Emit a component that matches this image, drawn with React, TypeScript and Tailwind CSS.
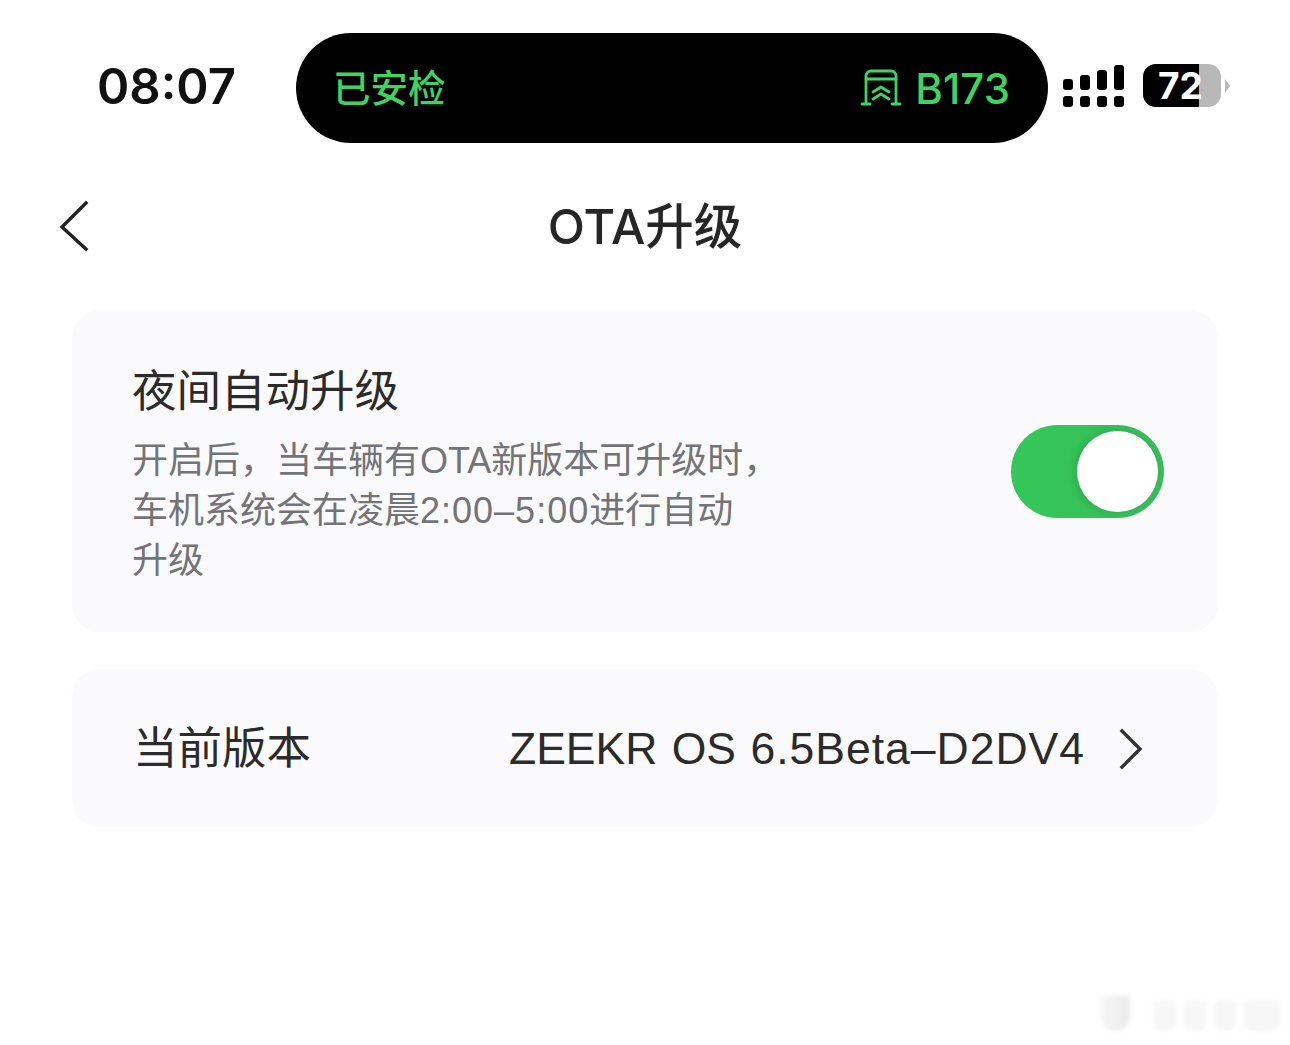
const sans = 'font-["Liberation_Sans","Noto_Sans_CJK_SC",sans-serif]'
const ui = 'font-["Inter","Noto_Sans_CJK_SC",sans-serif]'

function GarageIcon() {
  return (
    <svg width="44" height="44" viewBox="0 0 44 44" fill="none" stroke="#3fd35f" strokeWidth="2.800" strokeLinecap="round" strokeLinejoin="round">
      <path d="M7 38V10a5 5 0 0 1 5-5h20a5 5 0 0 1 5 5v28" />
      <path d="M7 13h30" />
      <path d="M3 38h8M33 38h8" />
      <path d="M14 26l8-5 8 5" />
      <path d="M14 33l8-5 8 5" />
    </svg>
  )
}

function SignalDots() {
  return (
    <div className="flex items-end gap-[7px]">
      <div className="flex flex-col gap-[6px]">
        <div className="w-[10px] h-[11px] rounded-[3px] bg-black" />
        <div className="w-[10px] h-[11px] rounded-[3px] bg-black" />
      </div>
      <div className="flex flex-col gap-[6px]">
        <div className="w-[10px] h-[15px] rounded-[3px] bg-black" />
        <div className="w-[10px] h-[11px] rounded-[3px] bg-black" />
      </div>
      <div className="flex flex-col gap-[6px]">
        <div className="w-[10px] h-[20px] rounded-[3px] bg-black" />
        <div className="w-[10px] h-[11px] rounded-[3px] bg-black" />
      </div>
      <div className="flex flex-col gap-[6px]">
        <div className="w-[10px] h-[25px] rounded-[3px] bg-black" />
        <div className="w-[10px] h-[11px] rounded-[3px] bg-black" />
      </div>
    </div>
  )
}

function Battery() {
  return (
    <div className="flex items-center">
      <div className="relative flex w-[78px] h-[43px] rounded-[13px] bg-[#b8b8b8]">
        <div className="w-[56px] rounded-l-[13px] bg-black" />
        <span className="absolute left-[15px] top-0 leading-[43px] text-[37px] font-bold text-white font-['Inter',sans-serif]">72</span>
      </div>
      <div className="ml-[4px] w-0 h-0 border-y-[7px] border-y-transparent border-l-[5px] border-l-[#b8b8b8]" />
    </div>
  )
}

function StatusBar() {
  return (
    <div className="flex items-center pt-[33px] pl-[97px]">
      <div className="w-[199px] mb-[2px] text-[49px] leading-[106px] font-semibold text-[#111] font-['Inter',sans-serif]">08:07</div>
      <div className={`flex items-center justify-between w-[752px] h-[110px] rounded-[55px] bg-black pl-[37px] pr-[38px] text-[#3fd35f] ${ui}`}>
        <span className="pt-[3px] text-[37.500px] font-medium">已安检</span>
        <div className="flex items-center gap-[12px]">
          <GarageIcon />
          <span className="text-[42px] font-medium">B173</span>
        </div>
      </div>
      <div className="ml-[15px] mb-[5px]"><SignalDots /></div>
      <div className="ml-[19px] mb-[5px]"><Battery /></div>
    </div>
  )
}

function Toggle() {
  return (
    <div className="flex justify-end items-center w-[153px] h-[93px] rounded-full bg-gradient-to-r from-[#35c759] to-[#37bd59] pr-[6px]">
      <div className="w-[81px] h-[81px] rounded-full bg-white shadow-[-3px_0_8px_rgba(0,0,0,0.12)]" />
    </div>
  )
}

export default function App() {
  return (
    <div className={`relative w-[1290px] h-[1045px] bg-white overflow-hidden ${sans}`}>
      <StatusBar />

      <div className="relative flex justify-center items-center h-[84px] mt-[42px]">
        <svg className="absolute left-[56px] top-[14px]" width="36" height="54" viewBox="0 0 36 54" fill="none" stroke="#222" strokeWidth="3.400" strokeLinecap="square">
          <path d="M30 4L6 28l24 22" />
        </svg>
        <h1 className={`text-[48.500px] font-medium text-[#262626] ${ui}`}>OTA升级</h1>
      </div>

      <div className="flex flex-col gap-[37px] mx-[72px] mt-[41px] w-[1146px]">
        <div className="flex justify-between items-center h-[322px] rounded-[28px] bg-[#fafafc] pl-[60px] pr-[54px]">
          <div className="self-start pt-[54px]">
            <div className="text-[44.500px] leading-[56px] text-[#2b2b2b]">夜间自动升级</div>
            <p className="mt-[16px] text-[36px] leading-[49.750px] text-[#737478]">
              开启后，当车辆有OTA新版本可升级时，<br />
              车机系统会在凌晨<span className="tracking-[1px]">2:00–5:00</span>进行自动<br />
              升级
            </p>
          </div>
          <Toggle />
        </div>

        <div className="flex items-center justify-between h-[158px] rounded-[28px] bg-[#fafafc] pl-[61px] pr-[74px] pt-[2px]">
          <span className="text-[44.500px] text-[#2b2b2b]">当前版本</span>
          <div className="flex items-center gap-[31px]">
            <span className="text-[44.500px] [word-spacing:2px] text-[#2b2b2b]">ZEEKR OS <span className="tracking-[1px]">6.5Beta–D2DV4</span></span>
            <svg width="28" height="44" viewBox="0 0 28 44" fill="none" stroke="#333" strokeWidth="3.400" strokeLinecap="square">
              <path d="M6 4l18 18L6 40" />
            </svg>
          </div>
        </div>
      </div>

      {/* watermark */}
      <div className="absolute left-[1100px] top-[996px] flex items-end gap-[8px] opacity-70 blur-[2px]">
        <div className="w-[30px] h-[35px] mr-[16px] rounded-b-[14px] bg-gradient-to-r from-[#f4f4f4] to-[#e2e2e2]" />
        <div className="w-[22px] h-[30px] rounded-b-[8px] bg-[#f3f3f3]" />
        <div className="w-[22px] h-[30px] rounded-b-[8px] bg-[#f3f3f3]" />
        <div className="w-[22px] h-[30px] rounded-b-[8px] bg-[#f3f3f3]" />
        <div className="w-[36px] h-[30px] rounded-b-[8px] bg-[#f3f3f3]" />
      </div>
    </div>
  )
}
